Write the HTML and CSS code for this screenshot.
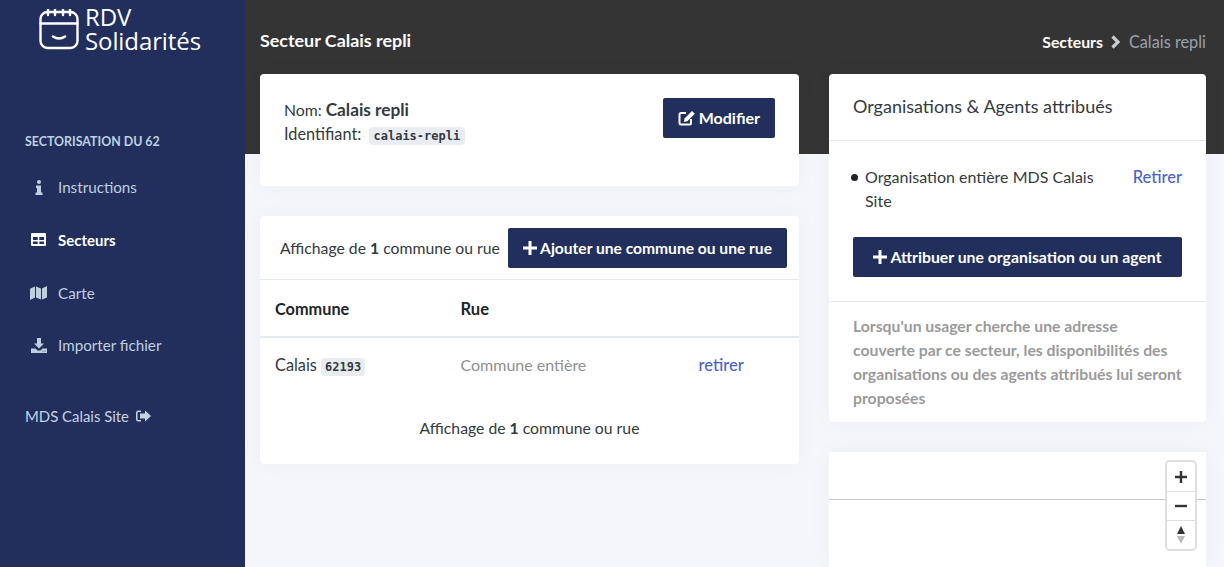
FILE: index.html
```html
<!DOCTYPE html>
<html lang="fr">
<head>
<meta charset="utf-8">
<title>Secteur Calais repli</title>
<link rel="stylesheet" href="styles.css">
</head>
<body>
<div class="app">
  <aside class="sidebar">
    <div class="logo">
      <svg class="logo-icon" width="42" height="42" viewBox="0 0 42 42" fill="none" stroke="#fff" stroke-width="2.4" stroke-linecap="round">
        <rect x="1.5" y="3" width="37" height="36" rx="7"/>
        <path d="M1.5 14.5H38.5M9 0.5V6M16 0.5V6M24 0.5V6M31 0.5V6"/>
        <path d="M14 27.5Q20 31.5 26 27.5" stroke-width="2.6"/>
      </svg>
      <div class="logo-text">RDV<br>Solidarités</div>
    </div>
    <div class="side-title">SECTORISATION DU 62</div>
    <nav class="side-nav">
      <a class="side-link">
        <span class="side-icon"><svg width="8" height="15" viewBox="0 0 8 15" fill="currentColor"><circle cx="4" cy="2" r="2"/><path d="M1 5.500H6V12.500H7.500V15H.5V12.500H2V8H1Z"/></svg></span>Instructions
      </a>
      <a class="side-link active">
        <span class="side-icon"><svg width="15" height="13" viewBox="0 0 15 13" fill="currentColor"><path fill-rule="evenodd" d="M1 0H14A1 1 0 0 1 15 1V12A1 1 0 0 1 14 13H1A1 1 0 0 1 0 12V1A1 1 0 0 1 1 0ZM2 4V7H6.700V4ZM8.300 4V7H13V4ZM2 8.500V11H6.700V8.500ZM8.300 8.500V11H13V8.500Z"/></svg></span>Secteurs
      </a>
      <a class="side-link">
        <span class="side-icon"><svg width="17" height="14" viewBox="0 0 17 14" fill="currentColor"><path d="M0 2.800L5 .5V11.500L0 14ZM6 .5L11 2.500V13.500L6 11.500ZM12 2.500L17 0V11.500L12 13.500Z"/></svg></span>Carte
      </a>
      <a class="side-link">
        <span class="side-icon"><svg width="16" height="15" viewBox="0 0 16 15" fill="currentColor"><path d="M6 0H10V5.500H13L8 10.500L3 5.500H6Z"/><path fill-rule="evenodd" d="M0 10.500H4.500L6.500 12.500H9.500L11.500 10.500H16V15H0ZM11.500 12.700V13.500H12.500V12.700ZM13.500 12.700V13.500H14.500V12.700Z"/></svg></span>Importer fichier
      </a>
    </nav>
    <div class="side-org">MDS Calais Site
      <svg width="15" height="12" viewBox="0 0 15 12" fill="currentColor"><path d="M5 0.500H2.500A2.500 2.500 0 0 0 0 3V9A2.500 2.500 0 0 0 2.500 11.500H5V10H2.500A1 1 0 0 1 1.500 9V3A1 1 0 0 1 2.500 2H5Z"/><path d="M9 .5L15 6L9 11.500V8.500H4V3.500H9Z"/></svg>
    </div>
  </aside>

  <main class="main">
    <header class="page-head">
      <h1 class="page-title">Secteur Calais repli</h1>
      <div class="crumbs">
        <span class="crumb-link">Secteurs</span>
        <svg class="crumb-sep" width="10" height="14" viewBox="0 0 10 14" fill="none" stroke="currentColor" stroke-width="3.200"><path d="M1.500 1.500L7 7L1.500 12.500"/></svg>
        <span class="crumb-current">Calais repli</span>
      </div>
    </header>

    <div class="columns">
      <div class="col-left">
        <section class="card info-card">
          <div class="info-text">
            <div class="info-line">Nom: <strong class="info-name">Calais repli</strong></div>
            <div class="info-line info-id">Identifiant: <code class="code-tag slug">calais-repli</code></div>
          </div>
          <a class="btn btn-edit">
            <svg width="18" height="16" viewBox="0 0 18 16" fill="none"><path d="M8 3H3A1.500 1.500 0 0 0 1.500 4.500V13A1.500 1.500 0 0 0 3 14.500H11.500A1.500 1.500 0 0 0 13 13V9" stroke="#fff" stroke-width="2"/><path d="M6.500 8.500L14 1L16.800 3.800L9.300 11.300L6 12Z" fill="#fff"/></svg>Modifier
          </a>
        </section>

        <section class="card list-card">
          <div class="list-head">
            <span>Affichage de <strong>1</strong> commune ou rue</span>
            <a class="btn">
              <svg width="14" height="14" viewBox="0 0 14 14" fill="#fff"><path d="M5.500 0H8.500V5.500H14V8.500H8.500V14H5.500V8.500H0V5.500H5.500Z"/></svg>Ajouter une commune ou une rue
            </a>
          </div>
          <div class="table-row table-header">
            <span class="cell-commune">Commune</span>
            <span class="cell-rue">Rue</span>
          </div>
          <div class="table-row table-body">
            <span class="cell-commune">Calais <code class="code-tag">62193</code></span>
            <span class="cell-rue muted">Commune entière</span>
            <a class="link">retirer</a>
          </div>
          <div class="list-foot">Affichage de <strong>1</strong> commune ou rue</div>
        </section>
      </div>

      <div class="col-right">
        <section class="card orgs-card">
          <h2 class="orgs-title">Organisations &amp; Agents attribués</h2>
          <div class="orgs-body">
            <div class="org-item">
              <span class="org-bullet"></span>
              <span class="org-name">Organisation entière MDS Calais Site</span>
              <a class="link org-remove">Retirer</a>
            </div>
            <a class="btn btn-full">
              <svg width="14" height="14" viewBox="0 0 14 14" fill="#fff"><path d="M5.500 0H8.500V5.500H14V8.500H8.500V14H5.500V8.500H0V5.500H5.500Z"/></svg>Attribuer une organisation ou un agent
            </a>
          </div>
          <p class="orgs-note">Lorsqu'un usager cherche une adresse couverte par ce secteur, les disponibilités des organisations ou des agents attribués lui seront proposées</p>
        </section>

        <section class="card map-card">
          <div class="map-line"></div>
          <div class="map-ctrl">
            <div class="map-btn"><svg width="14" height="14" viewBox="0 0 14 14" fill="#333"><path d="M5.800 1H8.200V5.800H13V8.200H8.200V13H5.800V8.200H1V5.800H5.800Z"/></svg></div>
            <div class="map-btn"><svg width="14" height="14" viewBox="0 0 14 14" fill="#333"><path d="M1 5.800H13V8.200H1Z"/></svg></div>
            <div class="map-btn"><svg width="10" height="18" viewBox="0 0 10 18" ><path d="M5 0L9 8H1Z" fill="#333"/><path d="M1 10H9L5 18Z" fill="#bbb"/></svg></div>
          </div>
        </section>
      </div>
    </div>
  </main>
</div>
</body>
</html>
```
FILE: styles.css
```css
* { box-sizing: border-box; }
html, body { margin: 0; padding: 0; height: 567px; overflow: hidden; }
body { font-family: Lato, "Liberation Sans", sans-serif; font-size: 15.750px; line-height: 24px; color: #343a40; background: #f5f6fb; }
a { text-decoration: none; }

.app { display: flex; height: 567px; overflow: hidden; }

.sidebar { flex: 0 0 245px; background: #222f5d; color: #bfcfe0; padding: 0 0 0 25px; }
.logo { display: flex; align-items: flex-start; gap: 5px; margin: 9px 0 0 14px; height: 75px; }
.logo-icon { flex: none; }
.logo-text { font-family: "Open Sans", sans-serif; font-size: 24px; line-height: 24px; color: #fff; font-weight: 500; margin-top: -4px; margin-left: -1px; letter-spacing: -.1px; }
.side-title { margin-top: 48px; font-size: 12.400px; line-height: 20px; font-weight: 700; color: #bfd0e2; }
.side-nav { display: flex; flex-direction: column; margin-top: 9px; }
.side-link { display: flex; align-items: center; height: 52.670px; font-size: 15.200px; color: #bfcfe0; }
.side-link.active { color: #fff; font-weight: 700; font-size: 15px; }
.side-icon { flex: 0 0 33px; display: flex; justify-content: center; padding-right: 6px; }
.side-org { display: flex; align-items: center; gap: 7px; margin-top: 32px; font-size: 14.900px; color: #c5d3e3; }

.main { flex: 1; padding: 0 18px 0 15px; background: linear-gradient(#343434 154px, #f5f6fb 154px); min-width: 0; }
.page-head { display: flex; justify-content: space-between; height: 74px; color: #fff; }
.page-title { margin: 28px 0 0; font-size: 17.900px; line-height: 24px; font-weight: 700; color: #fff; }
.crumbs { display: flex; align-items: center; gap: 8px; height: 24px; margin: 30px 0 0; font-size: 15.800px; }
.crumb-link { font-weight: 700; color: #fff; }
.crumb-sep { color: #c6ccd2; }
.crumb-current { color: #98a2ab; font-size: 16.300px; }

.columns { display: flex; gap: 30px; }
.col-left { flex: 0 0 539px; display: flex; flex-direction: column; gap: 30px; }
.col-right { flex: 0 0 377px; display: flex; flex-direction: column; gap: 30px; }

.card { background: #fff; border-radius: 4px; box-shadow: 0 0 24px rgba(40, 50, 90, .03); }

.info-card { display: flex; justify-content: space-between; align-items: flex-start; height: 112px; padding: 24px 24px 0; }
.info-line { height: 24px; }
.info-id { font-size: 16.300px; }
.info-name { font-size: 17.300px; color: #343a40; }
.code-tag { display: inline-block; font-family: "DejaVu Sans Mono", monospace; font-size: 12px; font-weight: 700; line-height: 18px; padding: 0 4px; background: #e9edf2; border-radius: 4px; color: #343a40; }
.slug { margin-left: 3px; padding: 0 5px; }

.btn { display: inline-flex; align-items: center; justify-content: center; gap: 3px; height: 40px; padding: 0 15px; background: #222f5d; color: #fff; font-weight: 700; font-size: 15.600px; border-radius: 2px; white-space: nowrap; }
.btn-edit { font-size: 16px; }
.btn-full { display: flex; width: 100%; font-size: 15.800px; }

.list-card { height: 248px; }
.list-head { display: flex; justify-content: space-between; align-items: center; height: 64px; padding: 0 12px 0 20px; border-bottom: 1px solid #e4e9ee; }
.table-row { display: flex; align-items: center; padding-left: 15px; }
.table-header { height: 58px; padding-top: 2px; font-weight: 700; color: #212529; font-size: 16.600px; border-bottom: 2px solid #e4e9ee; }
.table-body { height: 56px; padding-bottom: 3px; }
.cell-commune { flex: 0 0 185.500px; font-size: 16.300px; }
.cell-rue { flex: 0 0 238px; }
.muted { color: #8f8f8f; font-size: 16px; }
.link { color: #4a63c8; font-size: 16.500px; font-weight: 500; }
.list-foot { text-align: center; margin-top: 22px; }

.orgs-card { height: 348px; }
.orgs-title { margin: 0; height: 67px; padding: 20px 24px 0; font-size: 18px; line-height: 24px; font-weight: 400; color: #343a40; border-bottom: 1px solid #e4e9ee; }
.orgs-body { padding: 24px; border-bottom: 1px solid #e4e9ee; }
.org-item { display: flex; align-items: flex-start; margin-bottom: 24px; }
.org-bullet { flex: none; width: 7px; height: 7px; margin: 9px 7px 0 -2px; background: #212529; border-radius: 50%; }
.org-name { flex: 0 0 240px; font-size: 16px; }
.org-remove { margin-left: auto; }
.orgs-note { margin: 12px 24px 0; color: #9a9a9a; font-weight: 700; font-size: 15.750px; }

.map-card { position: relative; height: 115px; border-radius: 0; }
.map-line { position: relative; top: 47px; height: 1px; background: #c8c8c8; }
.map-ctrl { position: absolute; top: 8px; right: 9px; width: 32px; background: #fff; border: 2px solid #dedede; border-radius: 5px; }
.map-btn { display: flex; align-items: center; justify-content: center; height: 29px; border-top: 1px solid #ddd; }
.map-btn:first-child { border-top: 0; }
```
